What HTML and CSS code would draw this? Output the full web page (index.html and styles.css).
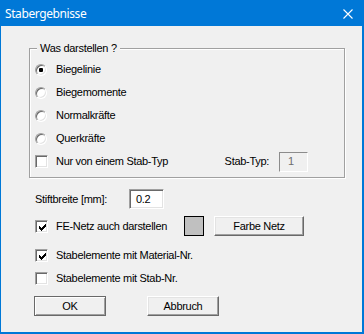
FILE: index.html
```html
<!DOCTYPE html>
<html>
<head>
<meta charset="utf-8">
<link rel="stylesheet" href="styles.css">
</head>
<body>
<div class="window">
  <div class="titlebar">
    <span class="title">Stabergebnisse</span>
    <svg class="close" width="10" height="10" viewBox="0 0 10 10"><path d="M0.5 0.5 L9.5 9.5 M9.5 0.5 L0.5 9.5" stroke="#fff" stroke-width="1.1" fill="none"/></svg>
  </div>
  <div class="content">
    <div class="group">
      <span class="legend">Was darstellen ?</span>
      <div class="row"><span class="ind"><span class="radio checked"></span></span><span class="label">Biegelinie</span></div>
      <div class="row"><span class="ind"><span class="radio"></span></span><span class="label">Biegemomente</span></div>
      <div class="row"><span class="ind"><span class="radio"></span></span><span class="label">Normalkräfte</span></div>
      <div class="row"><span class="ind"><span class="radio"></span></span><span class="label">Querkräfte</span></div>
      <div class="row">
        <span class="ind"><span class="check"></span></span><span class="label">Nur von einem Stab-Typ</span>
        <span class="stab-label">Stab-Typ:</span><span class="field disabled">1</span>
      </div>
    </div>
    <div class="orow row-stift">
      <span class="stift-label">Stiftbreite [mm]:</span><span class="field edit">0.2</span>
    </div>
    <div class="orow row-fe">
      <span class="ind"><span class="check"><svg class="tick" width="7" height="7" viewBox="0 0 7 7"><path d="M6 0h1v1h-1z M5 1h2v1h-2z M0 2h1v1h-1z M4 2h3v1h-3z M0 3h2v1h-2z M3 3h3v1h-3z M0 4h5v1h-5z M1 5h3v1h-3z M2 6h1v1h-1z" fill="#000" shape-rendering="crispEdges"/></svg></span></span>
      <span class="label fe-label">FE-Netz auch darstellen</span>
      <span class="swatch"></span>
      <span class="btn btn-farbe">Farbe Netz</span>
    </div>
    <div class="orow row-mat">
      <span class="ind"><span class="check"><svg class="tick" width="7" height="7" viewBox="0 0 7 7"><path d="M6 0h1v1h-1z M5 1h2v1h-2z M0 2h1v1h-1z M4 2h3v1h-3z M0 3h2v1h-2z M3 3h3v1h-3z M0 4h5v1h-5z M1 5h3v1h-3z M2 6h1v1h-1z" fill="#000" shape-rendering="crispEdges"/></svg></span></span>
      <span class="label">Stabelemente mit Material-Nr.</span>
    </div>
    <div class="orow row-stab">
      <span class="ind"><span class="check"></span></span>
      <span class="label">Stabelemente mit Stab-Nr.</span>
    </div>
    <div class="buttons">
      <span class="btn btn-ok default">OK</span>
      <span class="btn btn-cancel">Abbruch</span>
    </div>
  </div>
</div>
</body>
</html>
```

FILE: styles.css
```css
* { box-sizing: border-box; }
html, body { margin: 0; padding: 0; }
body {
  width: 364px;
  height: 334px;
  overflow: hidden;
  background: #f0f0f0;
  font-family: "Liberation Sans", Arial, sans-serif;
  font-size: 11px;
  letter-spacing: -0.3px;
  color: #000;
}
.window {
  width: 364px;
  height: 334px;
  border: 1px solid #0078d7;
  border-right-width: 2px;
  border-bottom-width: 2px;
  background: #f0f0f0;
  display: flex;
  flex-direction: column;
}
.titlebar {
  height: 25px;
  background: #0078d7;
  display: flex;
  align-items: center;
  padding-left: 4px;
  padding-right: 9px;
  flex-shrink: 0;
}
.title {
  flex: 1;
  color: #fff;
  font-family: "Noto Sans", sans-serif;
  font-size: 12px;
  letter-spacing: -0.4px;
}
.close { display: block; }
.content {
  padding: 22px 0 0 28px;
  line-height: 13px;
}
.group {
  position: relative;
  width: 316px;
  height: 130px;
  border: 1px solid #a0a0a0;
  box-shadow: inset 1px 1px #fff, 1px 1px #fff;
  padding: 9px 36px 4px 5px;
}
.legend {
  position: absolute;
  top: -7px;
  left: 7px;
  padding: 0 3px 0 3px;
  background: #f0f0f0;
}
.row {
  height: 23px;
  display: flex;
  align-items: center;
}
.ind {
  width: 13px;
  height: 13px;
  display: flex;
  align-items: center;
  justify-content: flex-start;
  flex-shrink: 0;
}
.label { margin-left: 8px; white-space: nowrap; }
.radio {
  width: 12px;
  height: 12px;
  border-radius: 50%;
  border: 1px solid;
  border-color: #a0a0a0 #fff #fff #a0a0a0;
  box-shadow: inset 1px 1px #696969, inset -1px -1px #e3e3e3;
  background: #fff;
  display: flex;
  align-items: center;
  justify-content: center;
}
.radio.checked::after {
  content: "";
  width: 4px;
  height: 4px;
  border-radius: 1px;
  background: #000;
}
.check {
  width: 13px;
  height: 13px;
  border: 1px solid;
  border-color: #a0a0a0 #fff #fff #a0a0a0;
  box-shadow: inset 1px 1px #696969, inset -1px -1px #e3e3e3;
  background: #fff;
  padding: 2px 0 0 2px;
  display: block;
}
.tick { display: block; margin: 1px 0 0 1px; }
.stab-label { margin-left: auto; margin-right: 10px; }
.field {
  height: 20px;
  border: 1px solid;
  border-color: #a0a0a0 #fff #fff #a0a0a0;
  box-shadow: inset 1px 1px #696969, inset -1px -1px #e3e3e3;
  display: flex;
  align-items: center;
}
.field.disabled {
  width: 29px;
  background: #f0f0f0;
  color: #6d6d6d;
  padding-left: 8px;
  box-shadow: none;
  border-color: #8c8c8c #fff #fff #8c8c8c;
}
.field.edit {
  width: 35px;
  background: #fff;
  padding-left: 6px;
}
.orow {
  height: 22px;
  display: flex;
  align-items: center;
  padding-left: 6px;
}
.row-stift { margin-top: 10px; }
.stift-label { width: 94px; }
.row-fe { margin-top: 5px; }
.fe-label { width: 128px; }
.swatch {
  width: 20px;
  height: 20px;
  border: 1px solid #000;
  background: #c0c0c0;
}
.btn {
  height: 20px;
  display: flex;
  align-items: center;
  justify-content: center;
  border: 1px solid;
  border-color: #fff #696969 #696969 #fff;
  box-shadow: inset -1px -1px #a0a0a0, inset 1px 1px #e3e3e3;
  background: #f0f0f0;
}
.btn-farbe { width: 90px; margin-left: 10px; }
.row-mat { margin-top: 7px; }
.row-stab { margin-top: 1px; }
.buttons {
  display: flex;
  margin-top: 7px;
  padding-left: 5px;
  gap: 41px;
}
.btn-ok, .btn-cancel { width: 72px; }
.btn.default {
  border-color: #696969;
  box-shadow: inset 1px 1px #fff, inset -1px -1px #a0a0a0;
}
```
